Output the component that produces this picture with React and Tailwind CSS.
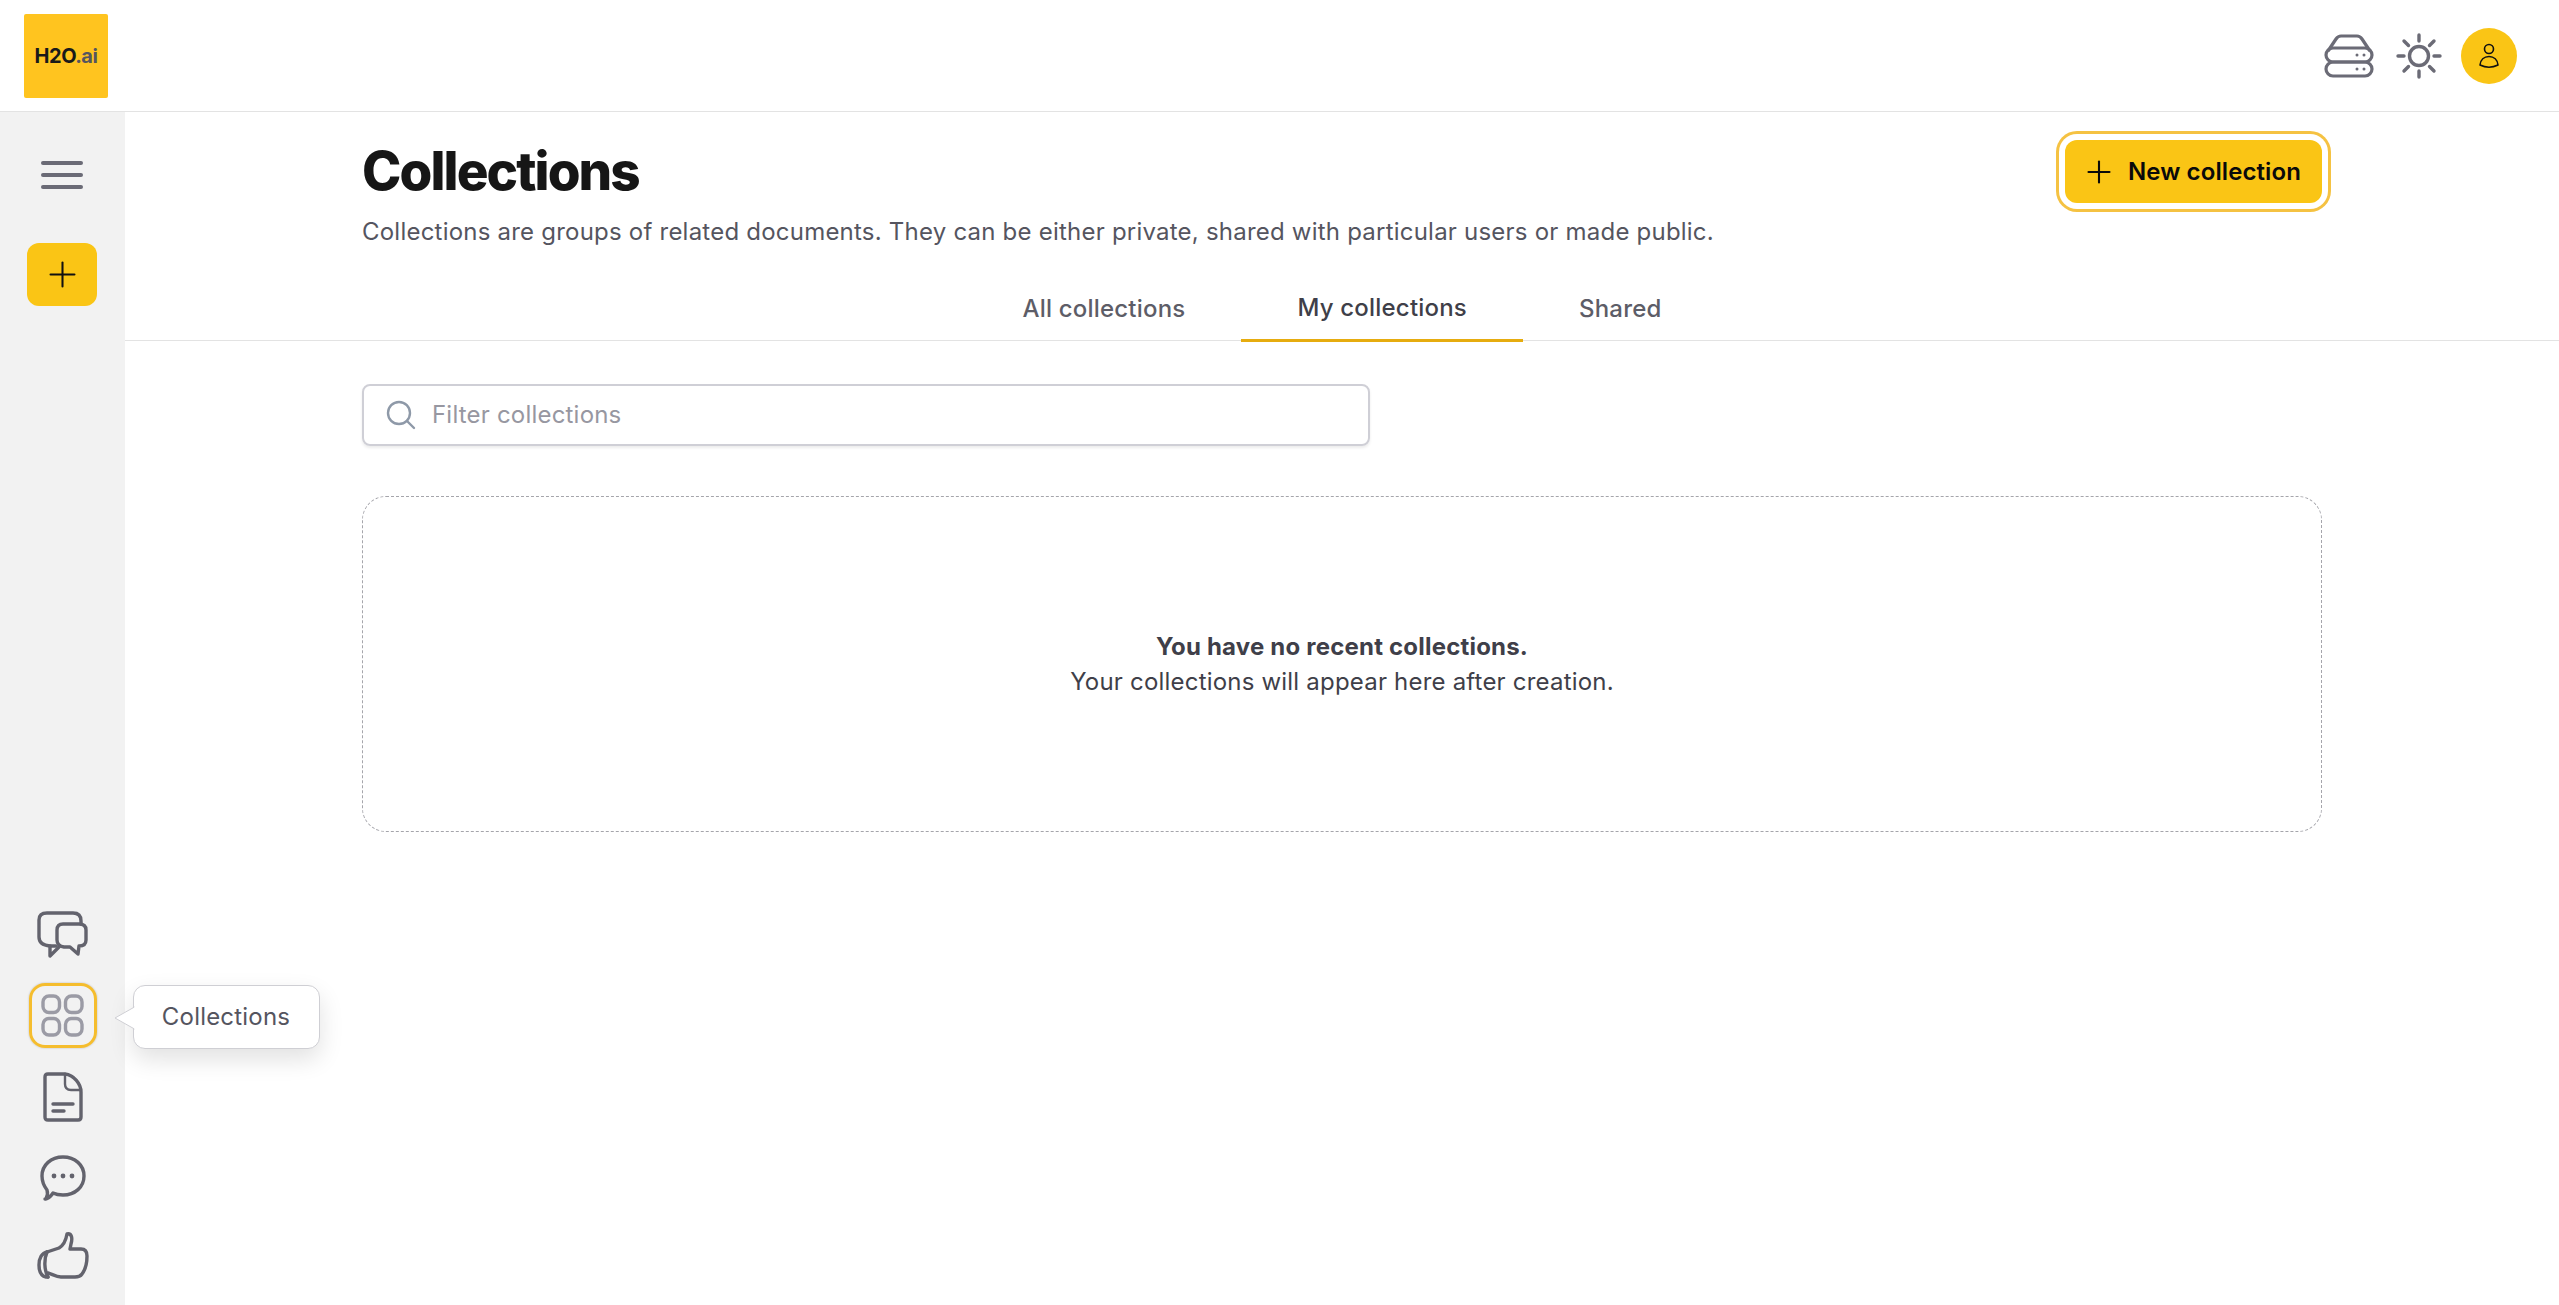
import { Plus } from 'lucide-react';

const FONT = { fontFamily: 'Inter, "Liberation Sans", sans-serif' };

function ServerIcon() {
  return (
    <svg width="50" height="44" viewBox="0 0 50 44" fill="none" stroke="#6b6b76" strokeWidth="3.2" strokeLinejoin="round">
      <path d="M4 17 L12 5 Q14 2 17 2 H33 Q36 2 38 5 L46 17" />
      <rect x="2" y="14" width="46" height="14" rx="7" />
      <rect x="2" y="28" width="46" height="14" rx="7" />
      <circle cx="33" cy="21" r="1.5" fill="#6b6b76" stroke="none" />
      <circle cx="40" cy="21" r="1.5" fill="#6b6b76" stroke="none" />
      <circle cx="33" cy="35" r="1.5" fill="#6b6b76" stroke="none" />
      <circle cx="40" cy="35" r="1.5" fill="#6b6b76" stroke="none" />
    </svg>
  );
}

function SunIcon() {
  return (
    <svg width="46" height="46" viewBox="0 0 46 46" fill="none" stroke="#6b6b76" strokeWidth="3.4" strokeLinecap="round">
      <circle cx="23" cy="23" r="9.5" />
      <path d="M23 2v6M23 38v6M2 23h6M38 23h6M8 8l4.5 4.5M33.500 33.500 38 38M38 8l-4.500 4.500M12.500 33.500 8 38" />
    </svg>
  );
}

function UserIcon() {
  return (
    <svg width="20" height="26" viewBox="0 0 20 26" fill="none" stroke="#111" strokeWidth="1.6">
      <circle cx="10" cy="6" r="4.500" />
      <path d="M1 22 C1.500 17 5 13.500 10 13.500 C15 13.500 18.500 17 19 22 C13 25 7 25 1 22 Z" strokeLinejoin="round" />
    </svg>
  );
}

function ChatsIcon() {
  return (
    <svg width="52" height="48" viewBox="0 0 52 48" fill="none" stroke="#63636d" strokeWidth="3.4" strokeLinejoin="round" strokeLinecap="round">
      <path d="M19 35 L13 35 Q2 34 2 26 V9 Q2 2 10 2 H36 Q44 2 44 10 V13" />
      <path d="M13 35 L13 45 L22 36" />
      <path d="M26 13 H42 Q49 13 49 19 V29 Q49 35 42 35 H42 L41 43 L33 36 H27 Q20 35 20 29 V19 Q20 13 26 13 Z" />
    </svg>
  );
}

function GridIcon() {
  return (
    <svg width="43" height="43" viewBox="0 0 43 43" fill="none" stroke="#9b9ba5" strokeWidth="3.400">
      <rect x="2" y="2" width="16.500" height="16.500" rx="6" />
      <rect x="24.500" y="2" width="16.500" height="16.500" rx="6" />
      <rect x="2" y="24.500" width="16.500" height="16.500" rx="6" />
      <rect x="24.500" y="24.500" width="16.500" height="16.500" rx="6" />
    </svg>
  );
}

function FileIcon() {
  return (
    <svg width="40" height="50" viewBox="0 0 40 50" fill="none" stroke="#63636d" strokeWidth="3.400" strokeLinejoin="round" strokeLinecap="round">
      <path d="M5 2 H22 C31 3 38 12 38 20 V45 Q38 48 35 48 H5 Q2 48 2 45 V5 Q2 2 5 2 Z" />
      <path d="M22 2 V12 Q22 18 28 18 H38" strokeWidth="2.400" />
      <path d="M10 32 H30 M10 39 H21" />
    </svg>
  );
}

function CommentIcon() {
  return (
    <svg width="46" height="46" viewBox="0 0 46 46" fill="none" stroke="#63636d" strokeWidth="3.400" strokeLinejoin="round">
      <path d="M23 2 C35 2 44 10 44 21 C44 32 35 40 23 40 C19 40 16 39.500 13 38 C11 41 8 44 5 44 L6 44 C7.500 41 8 38 7 35 C4 31 2 27 2 21 C2 10 11 2 23 2 Z" />
      <circle cx="14" cy="21" r="2.400" fill="#63636d" stroke="none" />
      <circle cx="23" cy="21" r="2.400" fill="#63636d" stroke="none" />
      <circle cx="32" cy="21" r="2.400" fill="#63636d" stroke="none" />
    </svg>
  );
}

function ThumbIcon() {
  return (
    <svg width="52" height="48" viewBox="0 0 52 48" fill="none" stroke="#63636d" strokeWidth="3.400" strokeLinejoin="round" strokeLinecap="round">
      <path d="M10 20 C5 21 2 26 2 33 C2 40 4 44 9 45 L11 45" />
      <path d="M10 20 C7 27 7 38 11 45" />
      <path d="M10 20 L22 16 C27 13 29 8 30 2 C34 1 36 5 34 12 L33 17 H44 C49 17 50 20 50 24 C50 31 48 38 45 42 C43 45 41 45 38 45 H24 C19 45 15 42 11 41" />
    </svg>
  );
}

function SearchIcon() {
  return (
    <svg width="30" height="30" viewBox="0 0 30 30" fill="none" stroke="#8e99a8" strokeWidth="2.400" strokeLinecap="round">
      <circle cx="13" cy="13" r="11" />
      <path d="M21 21 L28 28" />
    </svg>
  );
}

const TABS = [
  { label: 'All collections', active: false },
  { label: 'My collections', active: true },
  { label: 'Shared', active: false },
];

export default function App() {
  return (
    <div className="h-screen flex flex-col bg-white overflow-hidden tracking-[0.2px]" style={FONT}>
      <header className="h-[112px] shrink-0 flex items-center justify-between pl-6 pr-[42px] border-b border-[#e3e3e3]">
        <div className="w-[84px] h-[84px] rounded-[2px] bg-[#ffc41f] flex items-center justify-center">
          <span className="text-[20px] font-bold tracking-[-0.5px] text-[#1a1a1a]">
            H2O<span className="text-[#55555f]">.ai</span>
          </span>
        </div>
        <div className="flex items-center">
          <ServerIcon />
          <div className="ml-[22px]"><SunIcon /></div>
          <div className="ml-[19px] w-[56px] h-[56px] rounded-full bg-[#fac515] flex items-center justify-center">
            <UserIcon />
          </div>
        </div>
      </header>

      <div className="flex-1 flex min-h-0">
        <aside className="relative w-[125px] shrink-0 bg-[#f2f2f2] flex flex-col items-center justify-between pt-[49px] pb-[6px]">
          <div className="flex flex-col items-center -ml-px">
            <div className="w-[42px] flex flex-col gap-[8px]">
              <div className="h-1 rounded-full bg-[#6b6b76]" />
              <div className="h-1 rounded-full bg-[#6b6b76]" />
              <div className="h-1 rounded-full bg-[#6b6b76]" />
            </div>
            <div className="mt-[54px] w-[70px] h-[63px] rounded-[12px] bg-[#fac515] flex items-center justify-center">
              <Plus className="w-[41px] h-[41px] text-[#111]" strokeWidth={1.2} />
            </div>
          </div>
          <div className="flex flex-col items-center">
            <div className="h-[81px] flex items-center"><ChatsIcon /></div>
            <div className="h-[81px] flex items-center">
              <div className="relative w-[68px] h-[65px] rounded-[16px] border-[3px] border-[#f5bd2e] shadow-[0_0_2px_rgba(0,0,0,0.25)] flex items-center justify-center">
                <GridIcon />
                <div className="absolute left-[101px] top-[-1px] w-[187px] h-[64px] z-10 rounded-[12px] bg-white border border-[#cfcfd4] shadow-[0_10px_24px_rgba(0,0,0,0.12)] flex items-center justify-center text-[24px] text-[#55555f]">
                  Collections
                  <svg className="absolute left-[-20px] top-[20px]" width="21" height="24" viewBox="0 0 21 24">
                    <path d="M20.500 1 L1 12 L20.500 23" fill="white" stroke="#cfcfd4" strokeWidth="1" />
                    <rect x="20" y="1.500" width="2" height="21" fill="white" />
                  </svg>
                </div>
              </div>
            </div>
            <div className="h-[81px] flex items-center"><FileIcon /></div>
            <div className="h-[81px] flex items-center"><CommentIcon /></div>
            <div className="h-[81px] flex items-center pb-[5px]"><ThumbIcon /></div>
          </div>
        </aside>

        <main className="flex-1 min-w-0 flex flex-col">
          <div className="w-[1960px] mx-auto relative pt-[28px]">
            <h1 className="text-[53px] leading-[62px] font-extrabold tracking-[-1.9px] text-[#161616]">Collections</h1>
            <p className="mt-[12px] text-[24px] leading-[36px] tracking-[0.22px] text-[#55555f]">
              Collections are groups of related documents. They can be either private, shared with particular users or made public.
            </p>
            <div className="absolute right-0 top-[28px] h-[63px] pl-[16px] pr-[21px] rounded-[12px] bg-[#fac515] flex items-center gap-[11px] text-[24px] font-semibold tracking-[0.1px] text-[#0a0a0a] shadow-[0_0_0_6px_#ffffff,0_0_0_9px_#f5c242]">
              <Plus className="w-9 h-9" strokeWidth={1.4} />
              New collection
            </div>
          </div>

          <nav className="mt-[28px] h-[63px] border-b-[1.5px] border-[#e3e3e3] flex justify-center">
            {TABS.map(t => (
              <div
                key={t.label}
                className={
                  t.active
                    ? 'h-[64px] px-[56px] pb-px flex items-center justify-center text-[24px] font-medium text-[#3f3f49] border-b-[3px] border-[#e6ac0f]'
                    : 'h-[64px] px-[56px] pb-[2px] flex items-center justify-center text-[24px] font-medium text-[#5d5d67]'
                }
              >
                {t.label}
              </div>
            ))}
          </nav>

          <div className="w-[1960px] mx-auto pt-[43px]">
            <div className="w-[1008px] h-[62px] rounded-[8px] border-2 border-[#cfcfd6] shadow-[0_2px_3px_rgba(0,0,0,0.08)] flex items-center pl-[22px] gap-[16px]">
              <SearchIcon />
              <span className="text-[24px] text-[#9797a1]">Filter collections</span>
            </div>
            <div className="mt-[50px] h-[336px] rounded-[24px] border border-dashed border-[#a5a5ab] flex flex-col items-center justify-center text-[24px] leading-[35px] text-[#3f3f49]">
              <div className="font-bold">You have no recent collections.</div>
              <div>Your collections will appear here after creation.</div>
            </div>
          </div>
        </main>
      </div>
    </div>
  );
}
